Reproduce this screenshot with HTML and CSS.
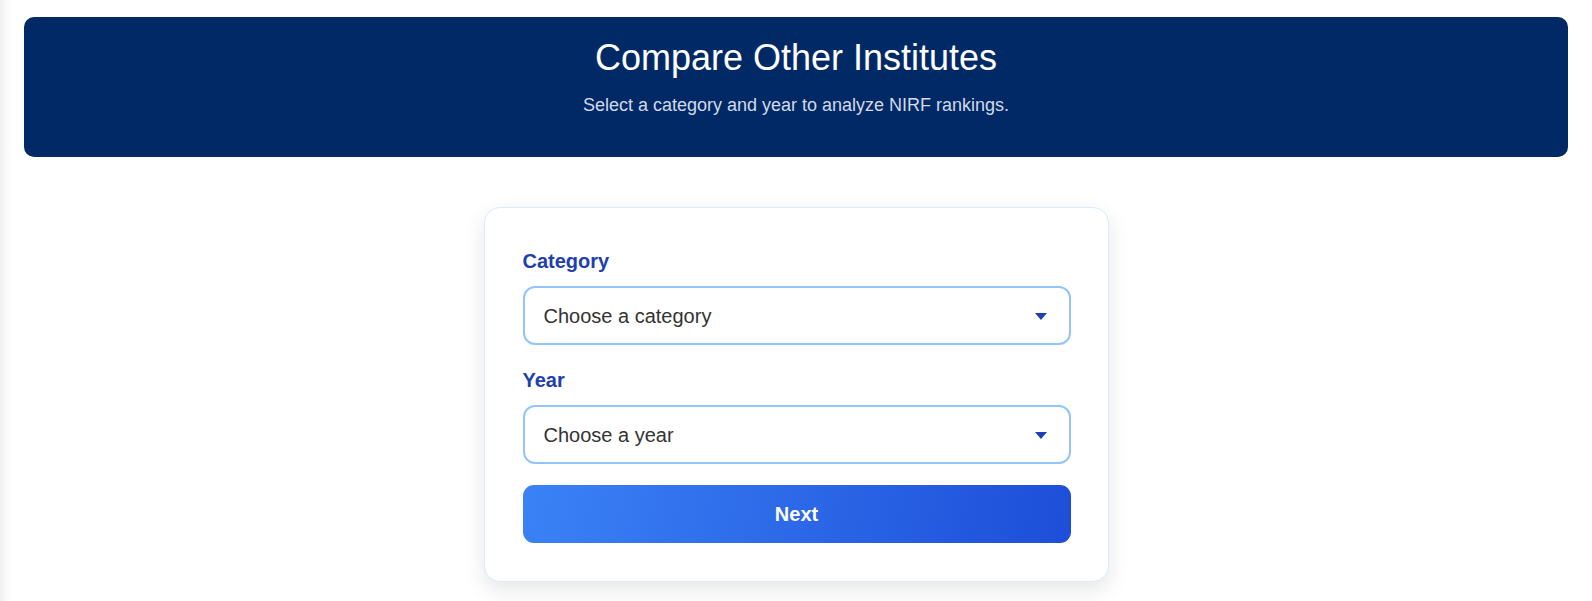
FILE: index.html
```html
<!DOCTYPE html>
<html lang="en">
<head>
    <meta charset="UTF-8">
    <meta name="viewport" content="width=device-width, initial-scale=1.0">
    <title>Compare Other Institutes</title>
    <link rel="stylesheet" href="styles.css">
</head>
<body>

<div class="page">
    <!-- Header banner -->
    <header class="banner">
        <h1>Compare Other Institutes</h1>
        <p>Select a category and year to analyze NIRF rankings.</p>
    </header>

    <!-- Selection form -->
    <div class="compare-card">
        <div class="form-group">
            <label for="category">Category</label>
            <div class="select-wrap">
                <select id="category">
                    <option value="">Choose a category</option>
                    <option>Overall</option>
                    <option>University</option>
                    <option>Engineering</option>
                    <option>Management</option>
                </select>
                <svg class="caret" width="12" height="7" viewBox="0 0 12 7"><path d="M0 0h12L6 7z" fill="#1e40af"/></svg>
            </div>
        </div>

        <div class="form-group">
            <label for="year">Year</label>
            <div class="select-wrap">
                <select id="year">
                    <option value="">Choose a year</option>
                    <option>2024</option>
                    <option>2023</option>
                    <option>2022</option>
                </select>
                <svg class="caret" width="12" height="7" viewBox="0 0 12 7"><path d="M0 0h12L6 7z" fill="#1e40af"/></svg>
            </div>
        </div>

        <button class="next-btn">Next</button>
    </div>
</div>

</body>
</html>
```

FILE: styles.css
```css
* {
    margin: 0;
    padding: 0;
    box-sizing: border-box;
}

body {
    font-family: 'Liberation Sans', Arial, sans-serif;
    background: linear-gradient(to right, #efefef, #fafafa 6px, #ffffff 12px);
    min-height: 100vh;
}

.page {
    padding: 17px 24px 0;
}

.banner {
    background-color: #002966;
    border-radius: 10px;
    padding: 19px 20px 38px;
    text-align: center;
}

.banner h1 {
    font-size: 36px;
    font-weight: normal;
    line-height: 44px;
    color: #ffffff;
}

.banner p {
    margin-top: 11px;
    font-size: 18px;
    line-height: 28px;
    color: #d3dae6;
}

.compare-card {
    width: 625px;
    margin: 50px auto 0;
    background: #ffffff;
    border: 1px solid #dbeafe;
    border-radius: 16px;
    padding: 39px 37px 38px 38px;
    box-shadow: 0 8px 22px rgba(0, 0, 0, 0.1);
}

.form-group {
    margin-bottom: 21px;
}

.form-group label {
    display: block;
    font-size: 20px;
    font-weight: bold;
    line-height: 28px;
    color: #1e40af;
    margin-bottom: 11px;
}

.select-wrap {
    position: relative;
}

.select-wrap select {
    width: 100%;
    height: 59px;
    appearance: none;
    -webkit-appearance: none;
    background: #ffffff;
    border: 2px solid #93c5fd;
    border-radius: 12px;
    padding: 0 48px 0 19px;
    font-family: inherit;
    font-size: 20px;
    color: #333333;
    outline: none;
}

.select-wrap .caret {
    position: absolute;
    right: 24px;
    top: 50%;
    margin-top: -3px;
    pointer-events: none;
}

.next-btn {
    display: block;
    width: 100%;
    height: 58px;
    margin-top: 20px;
    border: none;
    border-radius: 11px;
    background: linear-gradient(100deg, #3b82f6, #1d4ed8);
    color: #ffffff;
    font-family: inherit;
    font-size: 20px;
    font-weight: bold;
    cursor: pointer;
}
```
